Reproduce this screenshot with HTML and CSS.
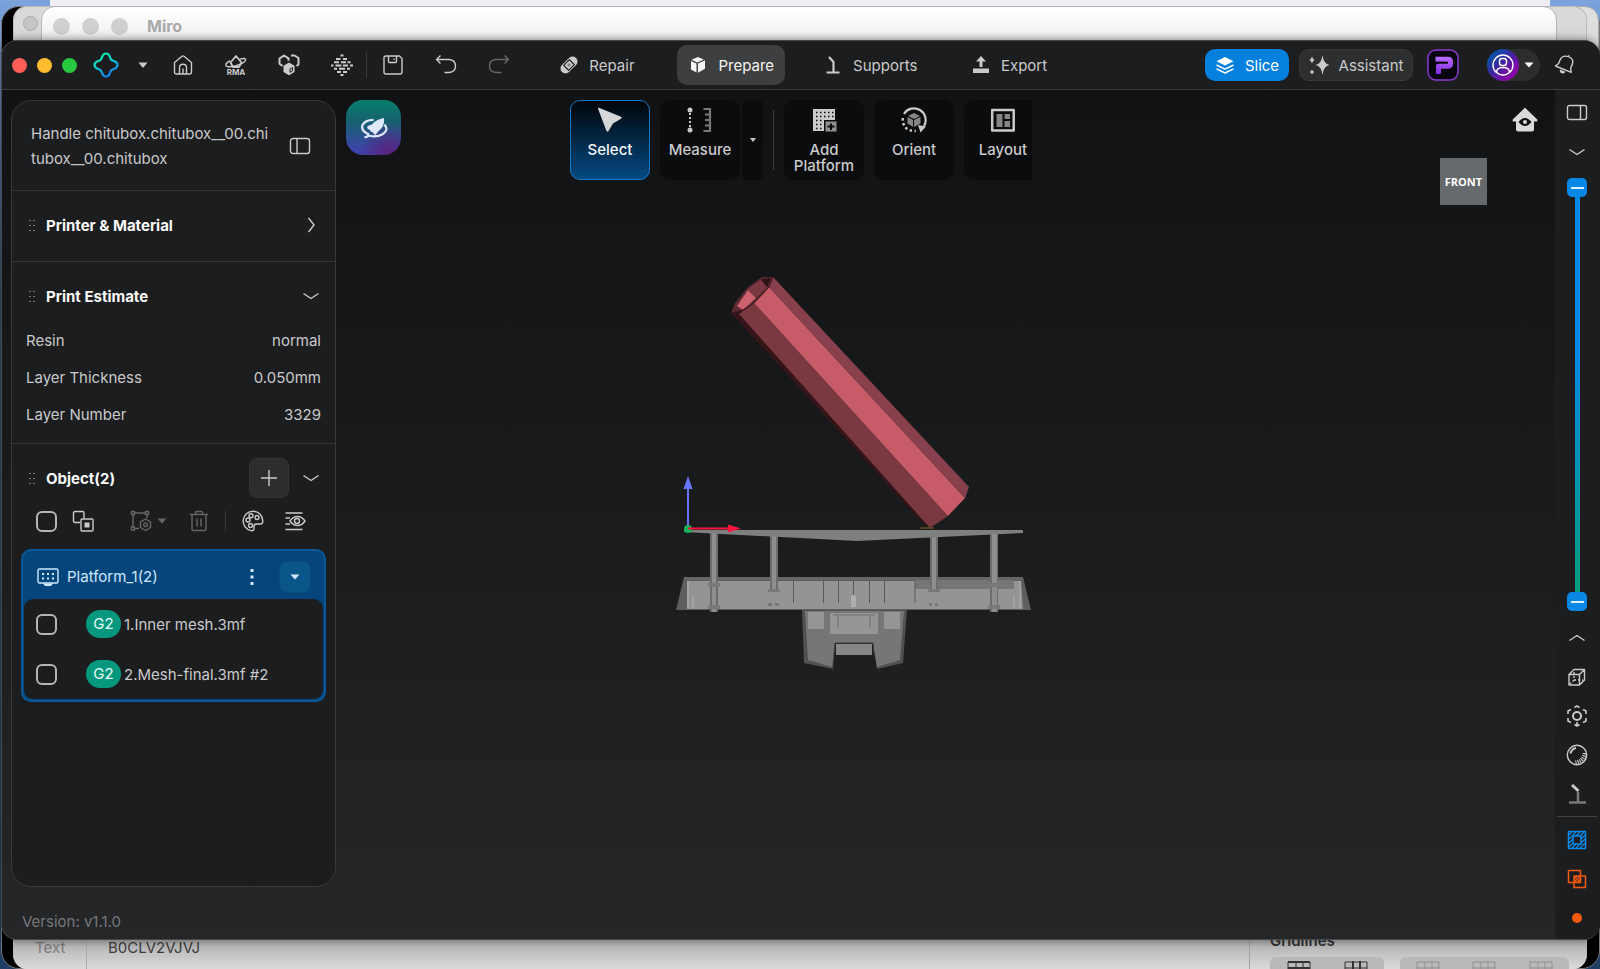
FILE: index.html
```html
<!DOCTYPE html>
<html lang="en">
<head>
<meta charset="utf-8">
<title>Handle chitubox</title>
<link rel="stylesheet" href="styles.css">
</head>
<body>
<div class="desktop">
  <div class="menu-strip"></div>
  <div class="win win-black"></div>
  <div class="win win-edge"></div>
  <section class="win win-sheet">
    <span class="sheet-light"></span>
    <div class="sheet-foot">
      <span class="sheet-label">Text</span>
      <span class="sheet-value">B0CLV2VJVJ</span>
      <div class="sheet-side">
        <span class="sheet-title">Gridlines</span>
        <div class="segments">
          <div class="segment">
            <svg viewBox="0 0 24 12"><path d="M1 1h22M1 7h22" stroke-width="2"/><path d="M1 1v11M9 1v11M16 1v11M23 1v11"/></svg>
            <svg viewBox="0 0 24 12"><path d="M1 1h22M1 7h22M1 1v11M23 1v11"/><path d="M9 0v12M16 0v12" stroke-width="2"/></svg>
          </div>
          <div class="segment faint">
            <svg viewBox="0 0 24 12"><path d="M1 1h22M1 7h22M1 1v11M9 1v11M16 1v11M23 1v11"/></svg>
            <svg viewBox="0 0 24 12"><path d="M1 1h22M1 7h22M1 1v11M9 1v11M16 1v11M23 1v11"/></svg>
            <svg viewBox="0 0 24 12"><path d="M1 1h22M1 7h22M1 1v11M9 1v11M16 1v11M23 1v11"/></svg>
          </div>
        </div>
      </div>
    </div>
  </section>
  <section class="win win-miro">
    <div class="miro-bar"><span></span><span></span><span></span><b>Miro</b></div>
  </section>

  <main class="win app">
    <header class="topbar">
      <div class="top-left">
        <div class="lights"><button class="light red" aria-label="Close"></button><button class="light amber" aria-label="Minimise"></button><button class="light green" aria-label="Zoom"></button></div>
        <button class="icon-btn logo" aria-label="Menu">
          <svg width="26" height="26" viewBox="0 0 26 26"><defs><linearGradient id="lg" x1="0.2" y1="0" x2="0.7" y2="1"><stop offset="0" stop-color="#12e8a4"/><stop offset="0.5" stop-color="#10c4d8"/><stop offset="1" stop-color="#1478ee"/></linearGradient></defs><path d="M13 1.500C15.500 1.500 16.300 3 17 5.200C17.600 7.600 18.400 8.400 20.800 9C23 9.700 24.500 10.500 24.500 13C24.500 15.500 23 16.300 20.800 17C18.400 17.600 17.600 18.400 17 20.800C16.300 23 15.500 24.500 13 24.500C10.500 24.500 9.700 23 9 20.800C8.400 18.400 7.600 17.600 5.200 17C3 16.300 1.500 15.500 1.500 13C1.500 10.500 3 9.700 5.200 9C7.600 8.400 8.400 7.600 9 5.200C9.700 3 10.500 1.500 13 1.500Z" fill="none" stroke="url(#lg)" stroke-width="2.200"/></svg>
        </button>
        <button class="icon-btn caret" aria-label="Open menu"><svg width="10" height="6" viewBox="0 0 10 6"><path class="solid" d="M0.500 0.500h9L5.500 5.500h-1z"/></svg></button>
        <div class="tools">
          <button class="icon-btn" aria-label="Home"><svg width="22" height="22" viewBox="0 0 22 22"><path d="M2.500 8.500L10 2.300q1-.8 2 0L19.500 8.500V18q0 2-2 2h-13q-2 0-2-2zM7.500 20v-6.500q0-3.200 3.500-3.200t3.500 3.200V20M11 20v-5.500"/></svg></button>
          <button class="icon-btn" aria-label="RMA"><svg width="22" height="22" viewBox="0 0 22 22"><path stroke-width="1.800" d="M5.500 8.500L11 2l5.500 6.500-2.500 4.500H8z"/><path d="M5 7C-.5 9.500-.5 13 5 12.800 12 12.500 22 8 20.500 5.200 20 4 17.500 4.500 15 5.200"/><text class="mini" x="11" y="21" text-anchor="middle">RMA</text></svg></button>
          <button class="icon-btn" aria-label="Models"><svg width="22" height="22" viewBox="0 0 22 22"><path stroke-width="2" d="M4.500 12L1.500 9.800V4.500L6 1.500l4.500 2.800v2.500M13 1.500h3.500L20.500 4v6.500l-2 1.500"/><path class="solid" d="M11 8.500l5.500 3.200V18L11 21.300 5.500 18v-6.300z"/><path stroke="#1d1e20" stroke-width="1" d="M12 15l2.500-1.500v3.300L12 18.300z"/></svg></button>
          <button class="icon-btn" aria-label="Layers"><svg width="22" height="22" viewBox="0 0 22 22"><path stroke-width="2" d="M9.500 1.500h3M5 5h4.500M12 5h4M3 8.300h5M10 8.300h5M16.500 8.300h3M0 11.500h2.500M4.500 11.500h6M12 11.500h5M19 11.500h3M3 14.800h3M8 14.800h6M16 14.800h3M6 18h4M12 18h4M9.500 21h3"/></svg></button>
          <span class="rule"></span>
          <button class="icon-btn" aria-label="Save"><svg width="22" height="22" viewBox="0 0 22 22"><path d="M4 2h13.500L20 4.500V18q0 2-2 2H4q-2 0-2-2V4q0-2 2-2zM6.500 2v5.500q0 1 1 1h6q1 0 1-1V2M12 4.500v1.500"/></svg></button>
          <button class="icon-btn" aria-label="Undo"><svg width="22" height="22" viewBox="0 0 22 22"><path d="M5.500 1.500L1.500 5.500l4 4M1.500 5.500H14q6.500.5 6.500 6.500T14 18.500H9.500"/></svg></button>
          <button class="icon-btn dim" aria-label="Redo"><svg width="22" height="22" viewBox="0 0 22 22"><path d="M16.500 1.500l4 4-4 4M20.500 5.500H8Q1.500 6 1.500 12T8 18.500h5.500"/></svg></button>
        </div>
      </div>
      <nav class="tabs">
        <button class="tab"><svg width="20" height="20" viewBox="0 0 20 20"><g transform="rotate(-45 10 10)"><rect class="solid" x="0" y="5" width="20" height="10" rx="5"/><rect x="6" y="6.500" width="8" height="7" fill="none" stroke="#1d1e20" stroke-width="1.200"/><rect x="8.500" y="8.500" width="3" height="3" fill="#1d1e20" stroke="none" opacity=".4"/></g></svg>Repair</button>
        <button class="tab active"><svg width="20" height="20" viewBox="0 0 20 20"><path class="solid" d="M9.800 2l6 2.500-6.500 3L3.500 4.700zM3 6l5.500 2.500v9L3 14.500zM10 8.500l7-3.300v8.500l-7 4z"/></svg>Prepare</button>
        <button class="tab"><svg width="20" height="20" viewBox="0 0 20 20"><path stroke-width="2.200" d="M6 2l4.500 5V17M3.500 17.500h13"/></svg>Supports</button>
        <button class="tab"><svg width="20" height="20" viewBox="0 0 20 20"><path class="solid" d="M10 1l5 5.500h-3.500V12h-3V6.500H5zM2 13.500h16v4.500H2z"/></svg>Export</button>
      </nav>
      <div class="top-right">
        <button class="slice"><svg width="20" height="20" viewBox="0 0 20 20"><path class="solid" d="M10 2l8.500 4.200L10 10.500 1.500 6.200z"/><path d="M1.500 10L10 14.200 18.500 10M1.500 13.800L10 18l8.500-4.200"/></svg>Slice</button>
        <button class="assist"><svg width="22" height="22" viewBox="0 0 22 22"><path class="solid" d="M13.500 1q1 9 7 10-6 1-7 10-1-9-7-10 6-1 7-10zM3 2.500q.7 2.800 2.700 3.500Q3.700 6.700 3 9.500 2.300 6.700.3 6 2.300 5.300 3 2.500z"/><circle class="solid" cx="3" cy="18" r="1.800"/></svg>Assistant</button>
        <button class="icon-btn pro" aria-label="Pro"><svg width="32" height="32" viewBox="0 0 32 32"><defs><linearGradient id="pg" gradientUnits="userSpaceOnUse" x1="0" y1="8" x2="0" y2="25"><stop offset="0" stop-color="#b96cff"/><stop offset="1" stop-color="#7d2ce0"/></linearGradient></defs><rect x="1" y="1" width="30" height="30" rx="8" fill="#08050d" stroke="#8b3bd0" stroke-width="1.500"/><path d="M8.500 10.200h12.500q2.500 0 2.500 2.500v2.100q0 2.500-2.500 2.500H11.500V25" fill="none" stroke="url(#pg)" stroke-width="5"/><path d="M8 13.300h11" stroke="#08050d" stroke-width="1.200"/></svg></button>
        <button class="account" aria-label="Account"><span class="avatar"><svg width="22" height="22" viewBox="0 0 22 22"><circle cx="11" cy="11" r="10"/><rect x="7.500" y="4.500" width="7" height="7" rx="2.500"/><path d="M4.500 18.500q0-5 6.500-5t6.500 5"/></svg></span><svg width="10" height="6" viewBox="0 0 10 6"><path class="solid" d="M.5.500h9L5 5.500z"/></svg></button>
        <button class="icon-btn" aria-label="Notifications"><svg width="22" height="22" viewBox="0 0 22 22"><g transform="rotate(22 11 11)"><path d="M2.500 15.500L4.500 12V8.500q0-6 6.500-6.500t6.500 6.500V12l2 3.500zM11 2V.5"/><path class="solid" d="M8 17h6q-.5 3-3 3t-3-3z"/></g></svg></button>
      </div>
    </header>

    <div class="work">
      <svg class="scene" viewBox="2 90 1598 849" role="img" aria-label="Model on build platform">
        <g fill="#747676">
          <path fill="#5d5f5f" d="M684 577H1023L1031 610H676Z"/>
          <path fill="#939494" d="M687 581H1021L1023 609H687Z"/>
          <path fill="#757777" d="M915 580H1014V589H915Z"/>
          <path fill="#656767" d="M684 577H1023V580H684Z"/>
          <path stroke="#5a5a5a" stroke-width="1" fill="none" d="M793.500 581v22M823.500 581v22M838.500 581v22M853.500 581v22M869.500 581v22M884.500 581v22M915 581v22"/>
          <path stroke="#b0b0b0" stroke-width="1" fill="none" d="M688 581v27M1020 581v27M693 596v12M1014 596v12"/>
          <path fill="#aeb0b0" d="M851 597q3-5 5 0v10h-5z"/>
          <path fill="#6c6e6e" d="M710 533h8v79h-8zM770 533h8v58h-8zM930 533h8v58h-8zM990 533h8v79h-8z"/><path fill="#8d8f8f" d="M712 533h4v79h-4zM772 533h4v58h-4zM932 533h4v58h-4zM992 533h5v79h-5z"/><path fill="#777979" d="M708 583h12v4h-12zM768 589h12v3h-12zM928 589h12v3h-12zM988 583h12v4h-12zM708 605h12v4h-12zM988 605h12v4h-12zM768 603h4v3h-4zM775 603h4v3h-4zM929 603h3v3h-3zM935 603h3v3h-3z"/>
          <path fill="#7e8080" d="M684 530H1023V533L857 541 684 532Z"/>
          <path fill="#505252" d="M802 610H907L903 663 877 669 873 643H835L833 669 804 663Z"/>
          <path fill="#757777" d="M805 611H904L900 660 877 667 873 643H835L832 667 808 660Z"/>
          <path fill="#949696" d="M808 612h16v17h-16zM884 612h16v17h-16zM830 613h48v21h-48z"/>
          <path fill="none" stroke="#808282" stroke-width="2" d="M833 615h42M838 616v12M870 616v12"/>
          <path fill="#858787" d="M836 644h36v11h-36z"/><path fill="none" stroke="#3d3f3f" stroke-width="1" d="M834 655l1-12h38l1 12"/>
        </g>
        <path fill="#35151a" d="M731 313L743 310 930 528 918 518Z"/>
        <path fill="#7a3841" d="M739 314L754 303 948 516 930 528Z"/>
        <path fill="#c75b68" d="M754 303L769 287 965 498 948 516Z"/>
        <path fill="#88414c" d="M769 287L773 277 969 487 965 498Z"/>
        <path fill="#5c2a31" d="M731 313L735 303 747 288 762 277H773L769 287 754 303 741 311Z"/>
        <path fill="#cd626f" d="M737 306L748 290 756 298 743 310Z"/>
        <path fill="#7a3842" d="M748 289L761 280 767 287 756 298Z"/>
        <path fill="#2c1115" d="M761 279L771 278 767 287Z"/>
        <path fill="none" stroke="#3a161b" stroke-width="1" d="M731 313L743 310 754 303 769 287 773 277"/>
        <path stroke="#8e6428" stroke-width="1" d="M920 528h14"/>
        <path stroke="#6673f5" stroke-width="2" d="M688 529V487"/><path fill="#6678ff" d="M688 476l4.500 13h-9z"/>
        <circle cx="688" cy="529" r="4" fill="#16b35a"/>
        <path stroke="#f5143c" stroke-width="2" d="M688 528.500h42"/><path fill="#ff1440" d="M741 528.500l-13 4v-8z"/>
      </svg>

      <div class="left-col">
        <aside class="panel">
          <div class="file"><span class="file-name">Handle chitubox.chitubox__00.chitubox__00.chitubox</span>
            <button class="icon-btn" aria-label="Collapse panel"><svg width="22" height="18" viewBox="0 0 22 18"><rect x="1.500" y="1.500" width="19" height="15" rx="2.500"/><path d="M8 1.500v15"/></svg></button></div>
          <section class="block short">
            <div class="head"><span class="grip"></span><h2>Printer &amp; Material</h2><button class="icon-btn" aria-label="Expand"><svg width="16" height="16" viewBox="0 0 16 16"><path d="M5.500 1l5.500 7-5.500 7"/></svg></button></div>
          </section>
          <section class="block">
            <div class="head"><span class="grip"></span><h2>Print Estimate</h2><button class="icon-btn" aria-label="Collapse"><svg width="16" height="16" viewBox="0 0 16 16"><path d="M.5 5.500L8 10.500 15.500 5.500"/></svg></button></div>
            <dl class="facts"><div><dt>Resin</dt><dd>normal</dd></div><div><dt>Layer Thickness</dt><dd>0.050mm</dd></div><div><dt>Layer Number</dt><dd>3329</dd></div></dl>
          </section>
          <section class="block objects">
            <div class="head"><span class="grip"></span><h2>Object(2)</h2><button class="plus" aria-label="Add object"><svg width="18" height="18" viewBox="0 0 18 18"><path d="M9 1v16M1 9h16"/></svg></button><button class="icon-btn" aria-label="Collapse"><svg width="16" height="16" viewBox="0 0 16 16"><path d="M.5 5.500L8 10.500 15.500 5.500"/></svg></button></div>
            <div class="obj-tools">
              <input type="checkbox" class="check" aria-label="Select all">
              <button class="icon-btn" aria-label="Invert selection"><svg width="22" height="22" viewBox="0 0 22 22"><path d="M8 12.500H3q-1.500 0-1.500-1.500V3Q1.500 1.500 3 1.500h7.500Q12 1.500 12 3v5"/><rect x="9" y="9" width="12" height="12" rx="1"/><rect class="solid" x="12.500" y="12.500" width="5" height="5"/></svg></button>
              <button class="icon-btn dim push" aria-label="Transform"><svg width="22" height="22" viewBox="0 0 22 22"><path d="M3 4.500V17M4.500 3H15M17 4.500V8M4.500 18.500H9M1.500 1.500h3v3h-3zM15.500 1.500h3v3h-3zM1.500 17h3v3h-3zM15.500 9l5 2.800v5.700l-5 3-5-3v-5.700z"/><circle cx="15.500" cy="14.700" r="1.800"/></svg></button>
              <button class="icon-btn dim tight" aria-label="Transform options"><svg width="10" height="6" viewBox="0 0 10 6"><path class="solid" d="M.5.500h9L5 5.500z"/></svg></button>
              <button class="icon-btn dim gap" aria-label="Delete"><svg width="20" height="22" viewBox="0 0 20 22"><path d="M1 4.500h18M6.500 4V2.500q0-1 1-1h5q1 0 1 1V4M3 4.500V19q0 1.500 1.500 1.500h11q1.500 0 1.500-1.500V4.500M8 8.500v8M12 8.500v8"/></svg></button>
              <span class="rule"></span>
              <button class="icon-btn" aria-label="Colour"><svg width="22" height="22" viewBox="0 0 22 22"><path d="M11 1.200a9.800 9.800 0 0 0-2 19.400q3 .5 3-2.100v-2q0-2.500 3-2.500h3.500q2.300 0 2.300-3A9.800 9.800 0 0 0 11 1.200z"/><circle cx="6" cy="10" r="2"/><circle cx="8.500" cy="15.500" r="2"/><circle cx="9" cy="5.800" r="2"/><circle cx="15" cy="7.500" r="2"/></svg></button>
              <button class="icon-btn wide" aria-label="Visibility"><svg width="22" height="22" viewBox="0 0 22 22"><path d="M1.500 3h17M1.500 8H6M1.500 14H6M1.500 19.500h17M6 11q3-4.500 7.500-4.500T21 11q-3 4.500-7.500 4.500T6 11z"/><circle cx="13" cy="11" r="2.500"/></svg></button>
            </div>
            <div class="card">
              <div class="card-head">
                <svg width="22" height="22" viewBox="0 0 22 22"><rect x="1" y="3" width="20" height="14" rx="1.500"/><path stroke-width="2" stroke-dasharray="2 3" d="M5 8h13M5 12.500h13"/><path class="solid" d="M6 17.500h10l-2 2.500H8z"/></svg>
                <span>Platform_1(2)</span>
                <button class="icon-btn" aria-label="More"><svg width="4" height="18" viewBox="0 0 4 18"><path class="solid" d="M.5 1h3v3h-3zM.5 7.500h3v3h-3zM.5 14h3v3h-3z"/></svg></button>
                <button class="fold" aria-label="Collapse platform"><svg width="10" height="6" viewBox="0 0 10 6"><path class="solid" d="M.5.500h9L5 5.500z"/></svg></button>
              </div>
              <ul class="items">
                <li><label><input type="checkbox" class="check"><b>G2</b>1.Inner mesh.3mf</label></li>
                <li><label><input type="checkbox" class="check"><b>G2</b>2.Mesh-final.3mf #2</label></li>
              </ul>
            </div>
          </section>
        </aside>
        <p class="version">Version: v1.1.0</p>
      </div>

      <button class="rocket" aria-label="Launch"><svg width="28" height="24" viewBox="0 0 28 24"><path class="solid" d="M24 2q1 8.500-5.500 13l-3 4q-1.500-.5-2.500-2.500-2.500-.5-3-2.500Q7 13 7 11q2-2.500 5-2.500Q15.500 3.500 24 2z"/><path d="M13.500 3.800Q5 4 2.500 9q-2 6 6.500 9.500M24.500 8.500q4.500 5.500-1.500 9.500-7 4-14 1.500M4.500 21q3 .5 4.500-2.500" stroke-width="2.200"/></svg></button>

      <div class="toolbar">
        <button class="tool on"><svg width="26" height="26" viewBox="0 0 26 26"><path class="solid" d="M1 1.800q0-1.300 1.500-.8L24 9.800q1.500 1 0 2L16 16.500l-4.500 7.500q-1 1.500-2 0z"/></svg>Select</button>
        <div class="pair">
          <button class="tool"><svg width="26" height="26" viewBox="0 0 26 26"><circle class="solid" cx="3" cy="3" r="2.500"/><circle class="solid" cx="3" cy="23" r="2.500"/><path stroke-width="2" stroke-dasharray="2 2" d="M3 6v15"/><path class="grey" stroke-width="2.200" d="M16.500 2H23v22h-6.500M18 7.500h4M18 13h4M18 18.500h4"/></svg>Measure</button>
          <button class="more" aria-label="Measure options"><svg width="6" height="4" viewBox="0 0 6 4"><path class="solid" d="M0 0h6L3 4z"/></svg></button>
        </div>
        <span class="rule"></span>
        <button class="tool"><svg width="26" height="26" viewBox="0 0 26 26"><path class="solid" d="M2 2h22v11H13v11H2z"/><path stroke="#0b0c0d" stroke-width="1.500" stroke-dasharray="1.500 2.500" d="M5 5.500h18M5 9.500h18M5 13.500h8M5 17.500h8M5 21.500h8"/><path fill="#909192" stroke="none" d="M14.500 14.500h11v10h-11z"/><path stroke="#0b0c0d" stroke-width="2" d="M20 16.500v6.500M16.500 19.500h7"/></svg>Add<br>Platform</button>
        <button class="tool"><svg width="26" height="26" viewBox="0 0 26 26"><path stroke-width="2.200" d="M3 7A11.500 11.500 0 1 1 23 19"/><path stroke-width="2.500" stroke-dasharray="2.500 2.500" d="M1.800 11q-.5 13 13 13"/><path class="solid" d="M17 18l8 1.500-5.500 6z"/><path fill="#858687" stroke="none" d="M13 6l6 3-6 3-6-3zM6.500 10l5.500 3v7l-5.500-3.500zM13 13l6.500-3v6.500L13 20z"/></svg>Orient</button>
        <button class="tool cut"><svg width="26" height="26" viewBox="0 0 26 26"><rect x="2.200" y="3" width="21.500" height="20.500" stroke-width="2.500"/><path class="greyfill" d="M6.500 7h6v13h-6zM14.500 7h5.500v5h-5.500zM14.500 14h5.500v6h-5.500z"/></svg>Layout</button>
      </div>

      <div class="view">
        <button class="icon-btn bright" aria-label="Home view"><svg width="26" height="26" viewBox="0 0 26 26"><path class="solid" fill-rule="evenodd" d="M13 .8L25.300 12.500v2H22v8q0 2-2 2H6q-2 0-2-2v-8H.7v-2zM6.500 15q6.500 8 13 0-6.500-8-13 0z"/><circle class="solid" cx="13" cy="15" r="2"/></svg></button>
        <button class="cube">FRONT</button>
      </div>

      <aside class="rail">
        <button class="icon-btn" aria-label="Right panel"><svg width="22" height="18" viewBox="0 0 22 18"><rect x="1.500" y="1.500" width="19" height="14" rx="2"/><path d="M14.500 1.500v14"/></svg></button>
        <button class="icon-btn step-down" aria-label="Layer down"><svg width="16" height="16" viewBox="0 0 16 16"><path d="M.5 5.500L8 10.500 15.500 5.500"/></svg></button>
        <div class="range"><span class="track"></span><input type="range" value="100" aria-label="Top layer"><input type="range" value="0" aria-label="Bottom layer"></div>
        <button class="icon-btn step-up" aria-label="Layer up"><svg width="16" height="16" viewBox="0 0 16 16"><path d="M.5 10.500L8 5.500 15.500 10.500"/></svg></button>
        <div class="rail-tools">
          <button class="icon-btn" aria-label="Perspective"><svg width="20" height="20" viewBox="0 0 20 20"><path d="M2 7.500h10.500V18H2zM2 7.500L7 2.500h10.500L12.500 7.500M17.500 2.500V13l-5 5"/><path stroke-dasharray="2 2" d="M7 5v8h9M7 13l-4 4"/></svg></button>
          <button class="icon-btn" aria-label="Focus"><svg width="22" height="22" viewBox="0 0 22 22"><circle cx="11" cy="11" r="4" stroke-width="2"/><path stroke-width="1.600" d="M8.500 2.500L11 1l2.500 1.500M8.500 19.500L11 21l2.500-1.500M2 9V6l3-1.500M20 9V6l-3-1.500M2 13v3l3 1.500M20 13v3l-3 1.500M11 17v3"/></svg></button>
          <button class="icon-btn" aria-label="Shading"><svg width="22" height="22" viewBox="0 0 22 22"><circle cx="11" cy="11" r="9.700"/><path d="M4.500 9.500q1-4.500 5.500-5.500" stroke-width="2"/><path stroke-width="4" stroke-dasharray="1.200 1" d="M18.500 9q-.5 8-9 9.500"/></svg></button>
          <button class="icon-btn" aria-label="Show supports"><svg width="20" height="20" viewBox="0 0 20 20"><path class="grey" stroke-width="2.500" d="M11 8v10M2 18.500h17"/><path stroke-width="3" d="M5 1l6.500 6"/></svg></button>
          <span class="rail-rule"></span>
          <button class="icon-btn blue" aria-label="Hatch region"><svg width="20" height="20" viewBox="0 0 20 20"><path stroke-width="1.500" d="M1.500 1.500h17v17h-17zM6 6h8v8H6z"/><path stroke-width="1.200" d="M2 5l3-3M2 9l7-7M2 13l4-4M9 6l4-4M2 17l4-4M13 6l4-4M14 9l4-4M14 13l4-4M5 18l4-4M9 18l4-4M13 18l5-5"/></svg></button>
          <button class="icon-btn orange" aria-label="Intersections"><svg width="20" height="20" viewBox="0 0 20 20"><path stroke-width="1.500" d="M1.500 1.500h12v12h-12zM7 7h11.500v11.500H7zM7.500 10l3-3M7.500 13l6-6M10.500 13l3-3"/></svg></button>
          <button class="icon-btn orange" aria-label="Record"><svg width="20" height="20" viewBox="0 0 20 20"><circle class="solid" cx="10" cy="10" r="5"/></svg></button>
        </div>
      </aside>
    </div>
  </main>
</div>
</body>
</html>
```
FILE: styles.css
```css
* { box-sizing: border-box; }
body { margin: 0; font-family: Inter, "Liberation Sans", sans-serif; font-size: 15px; color: #c9cacb; }
button { font: inherit; color: inherit; background: none; border: 0; padding: 0; display: flex; align-items: center; justify-content: center; }
h2, p, dl, dd, ul { margin: 0; padding: 0; }
svg { display: block; flex: none; fill: none; stroke: currentColor; stroke-width: 1.4px; stroke-linecap: butt; stroke-linejoin: round; }
.solid { fill: currentColor; stroke: none; }
.grey { stroke: #77787a; }
.greyfill { fill: #858687; stroke: none; }
.mini { font-size: 8px; font-weight: 700; fill: currentColor; stroke: none; }

.desktop { position: relative; height: 100vh; min-height: 800px; overflow: hidden; background: linear-gradient(#7ba3dc, #2f5278 30%, #1f3e63); }
.menu-strip { position: absolute; top: 0; left: 50px; right: 50px; height: 20px; background: #eeeef4; }
.win { position: absolute; overflow: hidden; }
.win-black { top: 6px; left: 1px; right: 0; bottom: 0; background: #000; border: 1px solid #77797b; border-radius: 18px; }
.win-edge { top: 6px; left: 1400px; right: 1px; height: 60px; background: #dedede; border: 1px solid #aaa; border-radius: 14px; }
.win-sheet { top: 6px; left: 13px; right: 13px; bottom: 0; background: #d9d9d9; border: 1px solid #bcbcbc; border-bottom: 0; border-radius: 14px; }
.sheet-light { position: absolute; top: 9px; left: 9px; width: 15px; height: 15px; border-radius: 50%; background: #c6c6c6; border: 1px solid #acacac; }
.sheet-foot { position: absolute; left: 0; right: 0; bottom: 0; height: 30px; display: flex; align-items: stretch; background: linear-gradient(#aeaeae, #dadada); line-height: 18px; }
.sheet-label { width: 73px; padding-left: 21px; color: #7b7b7b; border-right: 1px solid #a9a9a9; }
.sheet-value { padding-left: 21px; color: #3c3c3c; flex: 1; }
.sheet-side { width: 337px; padding-left: 20px; border-left: 1px solid #a2a2a2; }
.sheet-title { display: block; height: 18px; line-height: 4px; font-weight: 600; color: #303030; }
.segments { display: flex; gap: 16px; }
.segment { display: flex; justify-content: space-around; align-items: flex-start; width: 114px; height: 20px; padding-top: 4px; border-radius: 6px 6px 0 0; background: #b9b9b9; color: #333; }
.segment.faint { width: 169px; color: #8f8f8f; }
.segment svg { width: 24px; height: 12px; stroke-width: 1px; }
.win-miro { top: 6px; left: 41px; right: 43px; height: 60px; background: linear-gradient(#fff, #eee 34px); border: 1px solid #b5b5b5; border-radius: 14px; }
.miro-bar { display: flex; gap: 12px; align-items: center; height: 38px; padding-left: 11px; }
.miro-bar span { width: 17px; height: 17px; border-radius: 50%; background: #d0d0d0; }
.miro-bar b { padding-left: 7px; font-size: 16px; font-weight: 700; color: #a9a9a9; }

.app { top: 40px; left: 1px; right: 0; bottom: 29px; display: flex; flex-direction: column; background: #1d1e20; border: 1px solid #48494b; border-right: 0; border-radius: 16px; box-shadow: 0 0 10px rgba(0,0,0,.5); }
.topbar { display: grid; grid-template-columns: 1fr auto 1fr; align-items: center; height: 49px; border-bottom: 1px solid #3c3d3f; background: #1c1d1f; }
.top-left, .lights, .tools, .tabs, .top-right { display: flex; align-items: center; }
.lights { gap: 10px; padding-left: 10px; }
.light { width: 15px; height: 15px; border-radius: 50%; }
.red { background: #ff5f57; }
.amber { background: #febc2e; }
.green { background: #28c840; }
.logo { margin-left: 16px; }
.caret { margin-left: 19px; }
.tools { gap: 31px; margin-left: 24px; }
.rule { width: 1px; height: 26px; background: #3a3b3d; }
.tools .rule { margin: 0 -16px 0 -18px; }
.dim { color: #656668; }
.tabs { gap: 27px; padding-left: 4px; }
.tab { min-width: 107px; height: 40px; padding: 0 11px; gap: 10px; border-radius: 10px; }
.tab.active { background: #3e3f41; color: #f4f4f4; }
.top-right { justify-content: flex-end; padding-right: 24px; }
.slice, .assist { height: 32px; border-radius: 10px; }
.slice { width: 84px; gap: 10px; background: #0580dc; color: #fff; margin-right: 10px; }
.assist { width: 114px; gap: 8px; background: #2d2e30; border: 1px solid #38393b; margin-right: 14px; }
.account { height: 32px; width: 53px; justify-content: flex-start; gap: 5px; background: #2c2d2f; border-radius: 16px; color: #fff; margin: 0 14px 0 28px; }
.avatar { display: flex; align-items: center; justify-content: center; width: 32px; height: 32px; border-radius: 50%; background: linear-gradient(135deg, #0b4ca8 20%, #4a1fa0 50%, #8a06a8 80%); }

.work { flex: 1; min-height: 0; display: grid; grid-template-columns: 334px 1fr auto 45px; grid-template-rows: 1fr; background: linear-gradient(#101214, #17191b 40%, #252628); }
.work > * { grid-row: 1; }
.scene { grid-column: 1 / -1; width: 100%; height: 100%; min-height: 0; stroke: none; }
.left-col { grid-column: 1; display: flex; flex-direction: column; padding: 10px 0 0 9px; min-height: 0; }
.panel { flex: 1; min-height: 0; border: 1px solid #38393b; border-radius: 20px; background: #1c1d1f; }
.version { height: 52px; padding-left: 11px; line-height: 70px; color: #77787a; overflow: hidden; }
.file { display: flex; align-items: center; justify-content: space-between; height: 89px; padding: 0 24px 0 19px; }
.file-name { width: 240px; line-height: 25px; word-break: break-all; }
.block { border-top: 1px solid #343537; }
.short { height: 71px; }
.head { display: flex; align-items: center; height: 60px; padding: 8px 16px 0; }
.head h2 { flex: 1; font-size: 15px; font-weight: 700; color: #fafafa; }
.grip { width: 7px; height: 14px; margin-right: 11px; background: radial-gradient(circle, #77787a 1px, transparent 1px) 0 0 / 4px 5px; }
.facts { padding: 0 14px 10px; }
.facts > div { display: flex; justify-content: space-between; height: 37px; align-items: center; }
.plus { width: 40px; height: 40px; margin-right: 14px; border-radius: 8px; background: #2c2d2f; border: 1px solid #343537; }
.obj-tools { display: flex; align-items: center; height: 22px; margin-top: 6px; padding-left: 24px; }
.check { appearance: none; width: 21px; height: 21px; margin: 0 15px 0 0; border: 2px solid #b4b5b6; border-radius: 6px; }
.push { margin-left: 36px; }
.tight { margin-left: 5px; }
.gap { margin-left: 22px; }
.obj-tools .rule { height: 20px; margin: 0 16px 0 16px; }
.wide { margin-left: 20px; }
.card { margin: 17px 9px 0; padding: 0 1px 1px; border: 2px solid #07599a; border-radius: 10px; background: #04467b; }
.card-head { display: flex; align-items: center; height: 48px; padding: 3px 12px 0 13px; color: #cfe8ff; }
.card-head span { flex: 1; padding-left: 8px; }
.fold { width: 32px; height: 32px; margin-left: 25px; border-radius: 8px; background: #0b5689; border: 1px solid #0a4b7c; }
.items { list-style: none; border-radius: 9px; background: #1c1d1f; }
.items label { display: flex; align-items: center; height: 50px; padding-left: 12px; }
.items .check { margin-right: 29px; }
.items b { width: 35px; height: 28px; margin-right: 3px; border-radius: 14px; background: #05987f; color: #e4fff8; font-weight: 400; line-height: 28px; text-align: center; }
.rocket { grid-column: 2; align-self: start; justify-self: start; width: 55px; height: 55px; margin: 10px 0 0 10px; border-radius: 17px; background: radial-gradient(circle at 80% 100%, #5a2480 5%, transparent 45%), linear-gradient(#087b6c 5%, #17606f 40%, #3c45a8 90%); color: #dfe7fa; }
.toolbar { grid-column: 1 / -1; justify-self: center; align-self: start; display: flex; align-items: center; margin-top: 10px; gap: 10px; }
.tool { flex-direction: column; justify-content: flex-start; width: 80px; height: 80px; padding-top: 6px; gap: 9px; border: 1px solid transparent; border-radius: 10px; background: #0b0c0d; font-weight: 500; line-height: 16px; }
.tool.on { border-color: #1478c8; background: linear-gradient(#000508, #044a82); color: #f4f6f8; }
.tool.on svg { color: #d6d7d8; }
.pair { display: flex; gap: 2px; }
.more { width: 21px; height: 80px; border-radius: 6px; background: #0b0c0d; }
.toolbar .rule { height: 60px; }
.tool.cut { width: 68px; border-radius: 10px 0 0 10px; padding-left: 10px; }
.view { grid-column: 3; align-self: start; display: flex; align-items: flex-start; padding: 17px 17px 0 0; }
.view .icon-btn { order: 2; margin-left: 25px; color: #dadbdc; }
.cube { width: 47px; height: 47px; margin-top: 51px; background: #65696c; color: #fff; font-family: "Open Sans", sans-serif; font-size: 11px; font-weight: 700; }
.rail { grid-column: 4; display: flex; flex-direction: column; align-items: center; padding: 14px 1px 0 0; background: #1c1d1f; }
.step-down { margin: 22px 0 18px; }
.step-up { margin: 19px 0 20px; }
.range { position: relative; flex: 1; width: 20px; min-height: 100px; }
.track { position: absolute; top: 8px; bottom: 8px; left: 8px; width: 5px; background: linear-gradient(#078ae6, #078ae6 40%, #079d84 95%); }
.range input { position: absolute; inset: 0; width: 20px; height: 100%; margin: 0; appearance: none; writing-mode: vertical-lr; direction: rtl; background: none; pointer-events: none; }
.range input::-webkit-slider-thumb { appearance: none; width: 20px; height: 19px; border-radius: 5px; background: linear-gradient(#d8f0ff, #d8f0ff) center / 13px 2px no-repeat #0887e5; pointer-events: auto; }
.rail-tools { display: flex; flex-direction: column; align-items: center; gap: 18px; padding-bottom: 11px; }
.rail-tools .icon-btn { width: 22px; height: 21px; }
.rail-rule { width: 40px; height: 1px; margin: -6px 0; background: #424345; }
.blue { color: #0c8cea; }
.orange { color: #f4590c; }
```
